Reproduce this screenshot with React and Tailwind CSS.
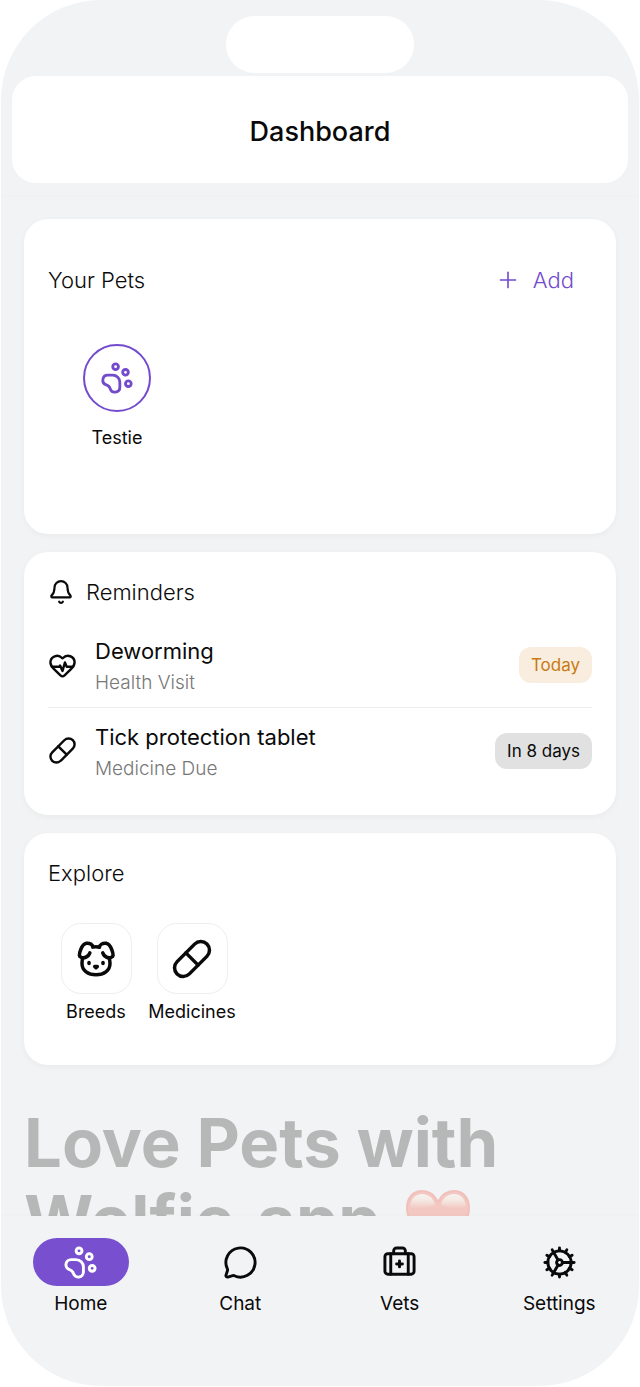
import { Bell, BriefcaseMedical, Cog, Dog, HeartPulse, MessageCircle, PawPrint, Pill, Plus } from 'lucide-react'
import clsx from 'clsx'

const reminders = [
  { title: 'Deworming', kind: 'Health Visit', due: 'Today', icon: HeartPulse, urgent: true },
  { title: 'Tick protection tablet', kind: 'Medicine Due', due: 'In 8 days', icon: Pill },
]

const explore = [
  { label: 'Breeds', icon: Dog },
  { label: 'Medicines', icon: Pill },
]

const tabs = [
  { label: 'Home', icon: PawPrint, active: true },
  { label: 'Chat', icon: MessageCircle },
  { label: 'Vets', icon: BriefcaseMedical },
  { label: 'Settings', icon: Cog },
]

function Card({ className, children }) {
  return (
    <section className={clsx('rounded-3xl bg-white px-6 shadow-[0_2px_6px_rgba(0,0,0,0.04)]', className)}>
      {children}
    </section>
  )
}

function Heart() {
  return (
    <svg viewBox="0 0 64 60" className="h-[60px] w-16 shrink-0" aria-hidden="true">
      <defs>
        <linearGradient id="shine" x1="0" y1="0" x2="0" y2="1">
          <stop offset="0" stopColor="#f4f3f2" />
          <stop offset="0.4" stopColor="#f5ebe4" />
          <stop offset="1" stopColor="#f3c8c3" />
        </linearGradient>
      </defs>
      <path
        d="M32 12C28 4 22 1 16 1 7 1 1 8 1 18c0 18 19 30 31 41 12-11 31-23 31-41C63 8 57 1 48 1c-6 0-12 3-16 11z"
        fill="#f3c8c3"
        stroke="#f2c0bb"
        strokeWidth="2"
      />
      <path d="M4 17C5 9 9 4 16 4s12 5 13 11c-8 4-18 4-25 2z" fill="url(#shine)" />
      <path d="M60 17C59 9 55 4 48 4s-12 5-13 11c8 4 18 4 25 2z" fill="url(#shine)" />
    </svg>
  )
}

export default function App() {
  return (
    <div className="h-screen bg-white px-px pb-px font-['Inter','Open_Sans',sans-serif] text-[#0a0a0a]">
      <div className="flex h-full flex-col overflow-hidden rounded-[100px] bg-[#f2f3f5]">
        <header className="border-b border-[#eff0f2] px-[11px] pt-4 pb-3">
          <div className="mx-auto h-[57px] w-[188px] rounded-full bg-white" />
          <div className="mt-[3px] rounded-3xl bg-white pt-[38px] pb-[33px]">
            <h1 className="text-center text-[27px] leading-9 font-medium">Dashboard</h1>
          </div>
        </header>

        <main className="flex min-h-0 flex-1 flex-col gap-[18px] overflow-hidden px-[23px] pt-[23px]">
          <Card className="pt-[45px] pb-[82px]">
            <div className="flex items-center justify-between">
              <h2 className="text-[22px] leading-8 font-light">Your Pets</h2>
              <button className="flex items-center gap-3 pr-[18px] text-[22px] leading-8 font-light text-[#734bcd]">
                <Plus size={26} strokeWidth={1.5} /> Add
              </button>
            </div>
            <button className="mt-12 flex w-[138px] flex-col items-center">
              <span className="flex size-[68px] items-center justify-center rounded-full border-2 border-[#734bcd] text-[#734bcd]">
                <PawPrint size={34} />
              </span>
              <span className="mt-3 text-lg leading-7">Testie</span>
            </button>
          </Card>

          <Card className="pt-6 pb-[22px]">
            <div className="flex items-center gap-3">
              <Bell size={26} />
              <h2 className="text-[22px] leading-8 font-light">Reminders</h2>
            </div>
            <ul className="mt-[15px]">
              {reminders.map(({ title, kind, due, icon: Icon, urgent }) => (
                <li key={title} className="flex h-[85px] items-center border-b border-[#eee] last:border-0">
                  <Icon size={29} className="shrink-0" />
                  <div className="min-w-0 flex-1 pt-1 pl-[18px]">
                    <p className="text-[22px] leading-8">{title}</p>
                    <p className="text-[19px] leading-8 font-light text-[#777]">{kind}</p>
                  </div>
                  <span
                    className={clsx(
                      'rounded-xl px-3 py-1 text-[17px] leading-7',
                      urgent ? 'bg-[#f8eddf] text-[#c97a10]' : 'bg-[#e1e1e1]',
                    )}
                  >
                    {due}
                  </span>
                </li>
              ))}
            </ul>
          </Card>

          <Card className="pt-6 pb-[41px]">
            <h2 className="text-[22px] leading-8 font-light">Explore</h2>
            <div className="mt-[34px] flex">
              {explore.map(({ label, icon: Icon }) => (
                <button key={label} className="flex w-24 flex-col items-center">
                  <span className="flex size-[71px] items-center justify-center rounded-[20px] border border-[#eee]">
                    <Icon size={42} />
                  </span>
                  <span className="mt-1.5 text-lg leading-6">{label}</span>
                </button>
              ))}
            </div>
          </Card>

          <p className="mt-[21px] text-[67px] leading-[77px] font-bold text-[#b6b8b8]">
            Love Pets with
            <span className="flex items-center gap-[26px]">
              Wolfie.app <Heart />
            </span>
          </p>
        </main>

        <nav className="grid grid-cols-4 pt-[22px] pb-[68px] shadow-[0_-1px_4px_rgba(0,0,0,0.02)]">
          {tabs.map(({ label, icon: Icon, active }) => (
            <a key={label} href="#" className="flex flex-col items-center">
              <span
                className={clsx('flex h-12 w-24 items-center justify-center rounded-full', active && 'bg-[#774fcf] text-white')}
              >
                <Icon size={35} />
              </span>
              <span className="mt-1 text-[19px] leading-7">{label}</span>
            </a>
          ))}
        </nav>
      </div>
    </div>
  )
}
